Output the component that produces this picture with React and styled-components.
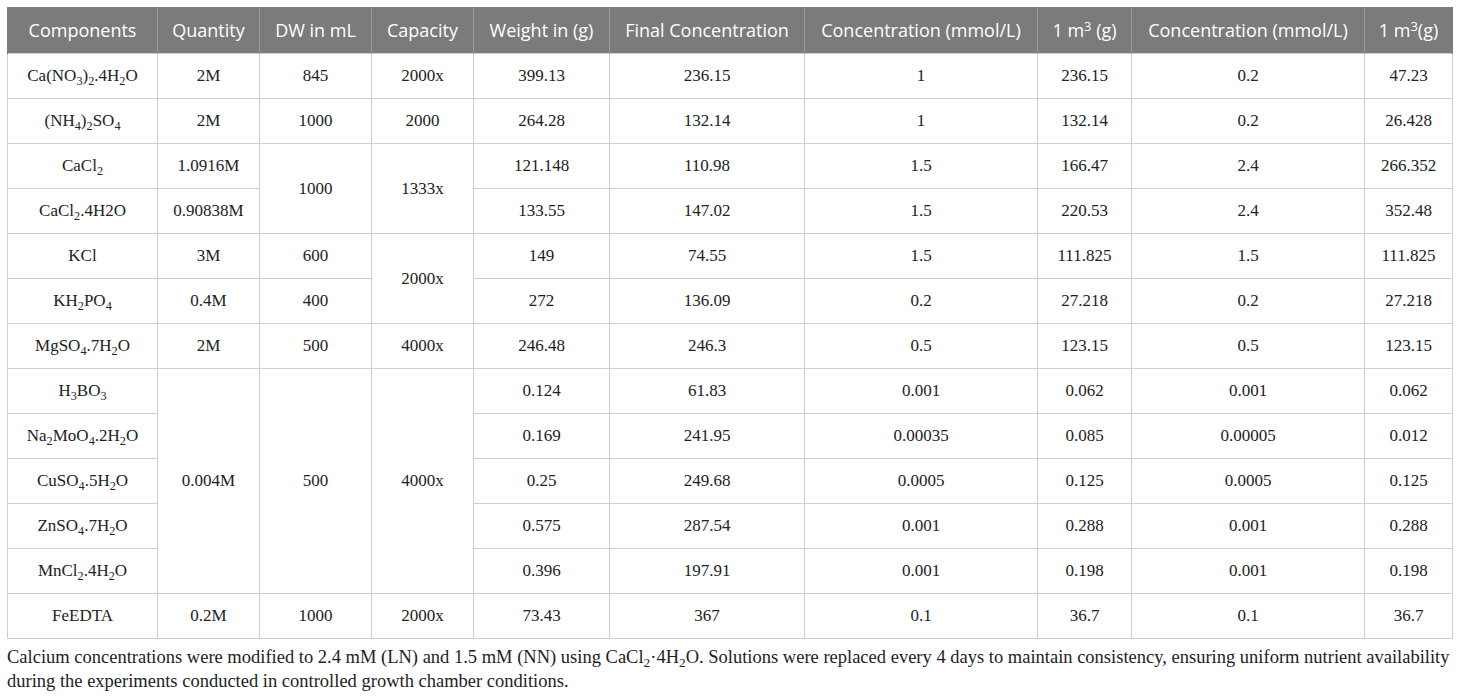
import React from 'react';
import styled, { createGlobalStyle } from 'styled-components';

const GlobalStyle = createGlobalStyle`
  html, body {
    margin: 0;
    padding: 0;
    background: #ffffff;
  }
`;

const Page = styled.div`
  padding: 7px 8px 0 7px;
  width: 1445px;
`;

const Table = styled.table`
  width: 1445px;
  border-collapse: collapse;
  table-layout: fixed;
  font-family: "Liberation Serif", "Times New Roman", serif;
  font-size: 17px;
  color: #222;
`;

const HeadCell = styled.th`
  background: #7a7b7a;
  color: #ffffff;
  font-family: "Open Sans", "Noto Sans", sans-serif;
  font-weight: 400;
  font-size: 18px;
  height: 46px;
  padding: 0 2px;
  text-align: center;
  border-left: 1px solid #9a9a9a;
  border-right: 1px solid #9a9a9a;
  white-space: nowrap;
  &:first-child { border-left: 1px solid #7a7b7a; }
  &:last-child { border-right: 1px solid #7a7b7a; }
`;

const Cell = styled.td`
  border: 1px solid #cfcfcf;
  height: 44px;
  padding: 0 2px;
  font-size: 17px;
  text-align: center;
  vertical-align: middle;
  white-space: nowrap;
`;

const Sub = styled.sub`
  font-size: 0.72em;
  vertical-align: -0.3em;
  line-height: 0;
`;

const Sup = styled.sup`
  font-size: 0.72em;
  vertical-align: 0.5em;
  line-height: 0;
`;

const Caption = styled.p`
  margin: 6px 0 0 0;
  font-family: "Liberation Serif", "Times New Roman", serif;
  font-size: 18.5px;
  line-height: 24px;
  color: #222;
  white-space: nowrap;
`;

const widths = [150, 102, 112, 102, 136, 195, 233, 94, 233, 88];

const f = (parts) =>
  parts.map((p, i) => (typeof p === 'number' ? <Sub key={i}>{p}</Sub> : <React.Fragment key={i}>{p}</React.Fragment>));

function App() {
  return (
    <Page>
      <GlobalStyle />
      <Table>
        <colgroup>
          {widths.map((w, i) => (
            <col key={i} style={{ width: w }} />
          ))}
        </colgroup>
        <thead>
          <tr>
            <HeadCell>Components</HeadCell>
            <HeadCell>Quantity</HeadCell>
            <HeadCell>DW in mL</HeadCell>
            <HeadCell>Capacity</HeadCell>
            <HeadCell>Weight in (g)</HeadCell>
            <HeadCell>Final Concentration</HeadCell>
            <HeadCell>Concentration (mmol/L)</HeadCell>
            <HeadCell>1 m<Sup>3</Sup> (g)</HeadCell>
            <HeadCell>Concentration (mmol/L)</HeadCell>
            <HeadCell>1 m<Sup>3</Sup>(g)</HeadCell>
          </tr>
        </thead>
        <tbody>
          <tr>
            <Cell>{f(['Ca(NO', 3, ')', 2, '.4H', 2, 'O'])}</Cell>
            <Cell>2M</Cell>
            <Cell>845</Cell>
            <Cell>2000x</Cell>
            <Cell>399.13</Cell>
            <Cell>236.15</Cell>
            <Cell>1</Cell>
            <Cell>236.15</Cell>
            <Cell>0.2</Cell>
            <Cell>47.23</Cell>
          </tr>
          <tr>
            <Cell>{f(['(NH', 4, ')', 2, 'SO', 4])}</Cell>
            <Cell>2M</Cell>
            <Cell>1000</Cell>
            <Cell>2000</Cell>
            <Cell>264.28</Cell>
            <Cell>132.14</Cell>
            <Cell>1</Cell>
            <Cell>132.14</Cell>
            <Cell>0.2</Cell>
            <Cell>26.428</Cell>
          </tr>
          <tr>
            <Cell>{f(['CaCl', 2])}</Cell>
            <Cell>1.0916M</Cell>
            <Cell rowSpan={2}>1000</Cell>
            <Cell rowSpan={2}>1333x</Cell>
            <Cell>121.148</Cell>
            <Cell>110.98</Cell>
            <Cell>1.5</Cell>
            <Cell>166.47</Cell>
            <Cell>2.4</Cell>
            <Cell>266.352</Cell>
          </tr>
          <tr>
            <Cell>{f(['CaCl', 2, '.4H2O'])}</Cell>
            <Cell>0.90838M</Cell>
            <Cell>133.55</Cell>
            <Cell>147.02</Cell>
            <Cell>1.5</Cell>
            <Cell>220.53</Cell>
            <Cell>2.4</Cell>
            <Cell>352.48</Cell>
          </tr>
          <tr>
            <Cell>KCl</Cell>
            <Cell>3M</Cell>
            <Cell>600</Cell>
            <Cell rowSpan={2}>2000x</Cell>
            <Cell>149</Cell>
            <Cell>74.55</Cell>
            <Cell>1.5</Cell>
            <Cell>111.825</Cell>
            <Cell>1.5</Cell>
            <Cell>111.825</Cell>
          </tr>
          <tr>
            <Cell>{f(['KH', 2, 'PO', 4])}</Cell>
            <Cell>0.4M</Cell>
            <Cell>400</Cell>
            <Cell>272</Cell>
            <Cell>136.09</Cell>
            <Cell>0.2</Cell>
            <Cell>27.218</Cell>
            <Cell>0.2</Cell>
            <Cell>27.218</Cell>
          </tr>
          <tr>
            <Cell>{f(['MgSO', 4, '.7H', 2, 'O'])}</Cell>
            <Cell>2M</Cell>
            <Cell>500</Cell>
            <Cell>4000x</Cell>
            <Cell>246.48</Cell>
            <Cell>246.3</Cell>
            <Cell>0.5</Cell>
            <Cell>123.15</Cell>
            <Cell>0.5</Cell>
            <Cell>123.15</Cell>
          </tr>
          <tr>
            <Cell>{f(['H', 3, 'BO', 3])}</Cell>
            <Cell rowSpan={5}>0.004M</Cell>
            <Cell rowSpan={5}>500</Cell>
            <Cell rowSpan={5}>4000x</Cell>
            <Cell>0.124</Cell>
            <Cell>61.83</Cell>
            <Cell>0.001</Cell>
            <Cell>0.062</Cell>
            <Cell>0.001</Cell>
            <Cell>0.062</Cell>
          </tr>
          <tr>
            <Cell>{f(['Na', 2, 'MoO', 4, '.2H', 2, 'O'])}</Cell>
            <Cell>0.169</Cell>
            <Cell>241.95</Cell>
            <Cell>0.00035</Cell>
            <Cell>0.085</Cell>
            <Cell>0.00005</Cell>
            <Cell>0.012</Cell>
          </tr>
          <tr>
            <Cell>{f(['CuSO', 4, '.5H', 2, 'O'])}</Cell>
            <Cell>0.25</Cell>
            <Cell>249.68</Cell>
            <Cell>0.0005</Cell>
            <Cell>0.125</Cell>
            <Cell>0.0005</Cell>
            <Cell>0.125</Cell>
          </tr>
          <tr>
            <Cell>{f(['ZnSO', 4, '.7H', 2, 'O'])}</Cell>
            <Cell>0.575</Cell>
            <Cell>287.54</Cell>
            <Cell>0.001</Cell>
            <Cell>0.288</Cell>
            <Cell>0.001</Cell>
            <Cell>0.288</Cell>
          </tr>
          <tr>
            <Cell>{f(['MnCl', 2, '.4H', 2, 'O'])}</Cell>
            <Cell>0.396</Cell>
            <Cell>197.91</Cell>
            <Cell>0.001</Cell>
            <Cell>0.198</Cell>
            <Cell>0.001</Cell>
            <Cell>0.198</Cell>
          </tr>
          <tr>
            <Cell>FeEDTA</Cell>
            <Cell>0.2M</Cell>
            <Cell>1000</Cell>
            <Cell>2000x</Cell>
            <Cell>73.43</Cell>
            <Cell>367</Cell>
            <Cell>0.1</Cell>
            <Cell>36.7</Cell>
            <Cell>0.1</Cell>
            <Cell>36.7</Cell>
          </tr>
        </tbody>
      </Table>
      <Caption>
        Calcium concentrations were modified to 2.4 mM (LN) and 1.5 mM (NN) using CaCl<Sub>2</Sub>·4H<Sub>2</Sub>O.
        Solutions were replaced every 4 days to maintain consistency, ensuring uniform nutrient availability
        <br />
        during the experiments conducted in controlled growth chamber conditions.
      </Caption>
    </Page>
  );
}

export default App;
